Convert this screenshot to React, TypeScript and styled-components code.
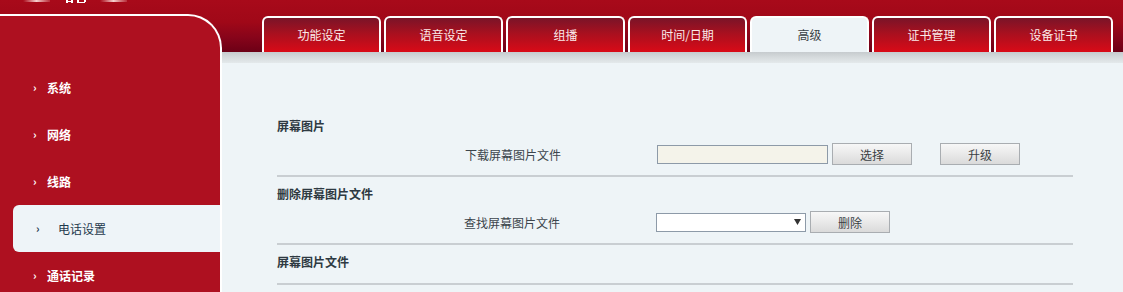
import React, { FC } from 'react'
import styled, { createGlobalStyle, css } from 'styled-components'

const GlobalStyle = createGlobalStyle`
  html, body, #root {
    margin: 0;
    height: 100%;
  }
  body {
    font-family: 'Noto Sans CJK SC', 'Noto Sans', sans-serif;
    font-size: 12px;
  }
`

const Page = styled.div`
  height: 100vh;
  overflow: hidden;
  display: flex;
  flex-direction: column;
  background: linear-gradient(
    180deg,
    #a80a1a 0px,
    #a00818 22px,
    #86041a 38px,
    #6c0016 52px,
    #eef4f7 52px
  );
`

const TopStrip = styled.div`
  height: 14px;
  flex: 0 0 14px;
  overflow: hidden;
`

const Body = styled.div`
  flex: 1;
  display: flex;
  min-height: 0;
`

const Sidebar = styled.nav`
  box-sizing: border-box;
  width: 222px;
  flex: 0 0 222px;
  background: #ae1020;
  border-top: 2px solid #fff;
  border-right: 2px solid #fff;
  border-top-right-radius: 34px;
  padding-top: 48px;
`

const MenuItem = styled.div<{ $active?: boolean }>(
  (props) => css`
    height: 47px;
    display: flex;
    align-items: center;
    padding-left: 33px;
    color: #fff;
    font-weight: 700;
    font-size: 12px;

    ${props.$active &&
    css`
      margin-left: 13px;
      padding-left: 23px;
      background: #eef4f8;
      border-radius: 6px 0 0 6px;
      color: #1f3a4d;
      font-weight: 400;
    `}
  `,
)

const Chevron = styled.span<{ $active?: boolean }>(
  (props) => css`
    font-size: 11px;
    width: ${props.$active ? '22px' : '14px'};
    font-weight: 700;
    line-height: 1;
  `,
)

const Main = styled.div`
  flex: 1;
  display: flex;
  flex-direction: column;
`

const TabBar = styled.div`
  height: 38px;
  box-sizing: border-box;
  padding: 2px 0 0 40px;
  display: flex;
  gap: 3px;
`

const Tab = styled.div<{ $active?: boolean }>(
  (props) => css`
    box-sizing: border-box;
    width: 119px;
    height: 36px;
    border: 2px solid #fff;
    border-bottom: none;
    border-radius: 6px 6px 0 0;
    display: flex;
    align-items: center;
    justify-content: center;
    padding-bottom: 1px;
    font-size: 12px;
    color: #fbeaea;
    background: linear-gradient(180deg, #7a1428 0%, #a8101f 45%, #d90a17 100%);

    ${props.$active &&
    css`
      background: #eef4f7;
      color: #3a3f44;
    `}
  `,
)

const Shade = styled.div`
  height: 11px;
  flex: 0 0 11px;
  background: linear-gradient(180deg, #c6cbce 0%, #d6dbdd 50%, #e4e9eb 100%);
`

const Content = styled.div`
  flex: 1;
  background: #eef4f7;
  padding: 46px 50px 0 55px;
`

const Section = styled.section`
  padding-top: 5px;
`

const SectionTitle = styled.div`
  height: 24px;
  line-height: 24px;
  font-weight: 700;
  color: #2e3a42;
`

const SectionBody = styled.div`
  min-height: 4px;
`

const Row = styled.div`
  height: 32px;
  display: flex;
  align-items: center;
`

const Label = styled.div<{ $shift?: number }>(
  (props) => css`
    width: ${284 - (props.$shift || 0)}px;
    text-align: right;
    margin-right: 96px;
    color: #3c454c;
  `,
)

const TextInput = styled.input`
  box-sizing: border-box;
  width: 171px;
  height: 19px;
  margin: 0 4px 0 0;
  border: 1px solid #8d9aa8;
  background: #f4f3ea;
`

const SelectBox = styled.div`
  box-sizing: border-box;
  width: 150px;
  height: 19px;
  margin-right: 4px;
  border: 1px solid #8d9aa8;
  background: #fff;
  display: flex;
  align-items: center;
  justify-content: flex-end;
  padding-right: 4px;
`

const Button = styled.button<{ $gap?: number }>(
  (props) => css`
    box-sizing: border-box;
    width: 80px;
    height: 22px;
    margin: 0 ${props.$gap || 0}px 0 0;
    padding: 0;
    border: 1px solid #a9adb1;
    background: linear-gradient(180deg, #f7f7f7 0%, #e8e8e8 55%, #dadada 100%);
    font-family: inherit;
    font-size: 12px;
    color: #3a3f44;
  `,
)

const Divider = styled.div`
  height: 2px;
  margin-top: 5px;
  background: #c9ced2;
`

const Logo: FC = () => (
  <svg width="140" height="14" viewBox="0 0 140 14">
    <defs>
      <linearGradient id="lg" x1="0" x2="1" y1="0" y2="0">
        <stop offset="0" stopColor="#f3b8b8" stopOpacity="0" />
        <stop offset="0.5" stopColor="#f6d2d0" />
        <stop offset="1" stopColor="#f3b8b8" stopOpacity="0.2" />
      </linearGradient>
    </defs>
    <rect x="23" y="0" width="27" height="2" fill="url(#lg)" />
    <rect x="100" y="0" width="27" height="2" fill="url(#lg)" />
    <rect x="66" y="0" width="2" height="3" fill="#fff" />
    <rect x="71" y="0" width="2" height="3" fill="#fff" />
    <rect x="66" y="1" width="7" height="1" fill="#fff" />
    <rect x="77" y="0" width="2" height="3" fill="#fff" />
    <rect x="77" y="2" width="8" height="1" fill="#fff" />
    <rect x="84" y="0" width="2" height="2" fill="#fff" />
  </svg>
)

const Arrow: FC = () => (
  <svg width="7" height="6" viewBox="0 0 7 6">
    <path d="M0 0 L7 0 L3.5 6 Z" fill="#333" />
  </svg>
)

const menu = ['系统', '网络', '线路', '电话设置', '通话记录']
const tabs = ['功能设定', '语音设定', '组播', '时间/日期', '高级', '证书管理', '设备证书']

export default function App() {
  return (
    <>
      <GlobalStyle />
      <Page>
        <TopStrip>
          <Logo />
        </TopStrip>
        <Body>
          <Sidebar>
            {menu.map((item) => {
              const active = item === '电话设置'
              return (
                <MenuItem key={item} $active={active}>
                  <Chevron $active={active}>›</Chevron>
                  {item}
                </MenuItem>
              )
            })}
          </Sidebar>
          <Main>
            <TabBar>
              {tabs.map((t) => (
                <Tab key={t} $active={t === '高级'}>
                  {t}
                </Tab>
              ))}
            </TabBar>
            <Shade />
            <Content>
              <Section>
                <SectionTitle>屏幕图片</SectionTitle>
                <SectionBody>
                  <Row>
                    <Label>下载屏幕图片文件</Label>
                    <TextInput type="text" />
                    <Button $gap={28}>选择</Button>
                    <Button>升级</Button>
                  </Row>
                </SectionBody>
                <Divider />
              </Section>
              <Section>
                <SectionTitle>删除屏幕图片文件</SectionTitle>
                <SectionBody>
                  <Row>
                    <Label $shift={1}>查找屏幕图片文件</Label>
                    <SelectBox>
                      <Arrow />
                    </SelectBox>
                    <Button>删除</Button>
                  </Row>
                </SectionBody>
                <Divider />
              </Section>
              <Section>
                <SectionTitle>屏幕图片文件</SectionTitle>
                <SectionBody />
                <Divider />
              </Section>
            </Content>
          </Main>
        </Body>
      </Page>
    </>
  )
}
